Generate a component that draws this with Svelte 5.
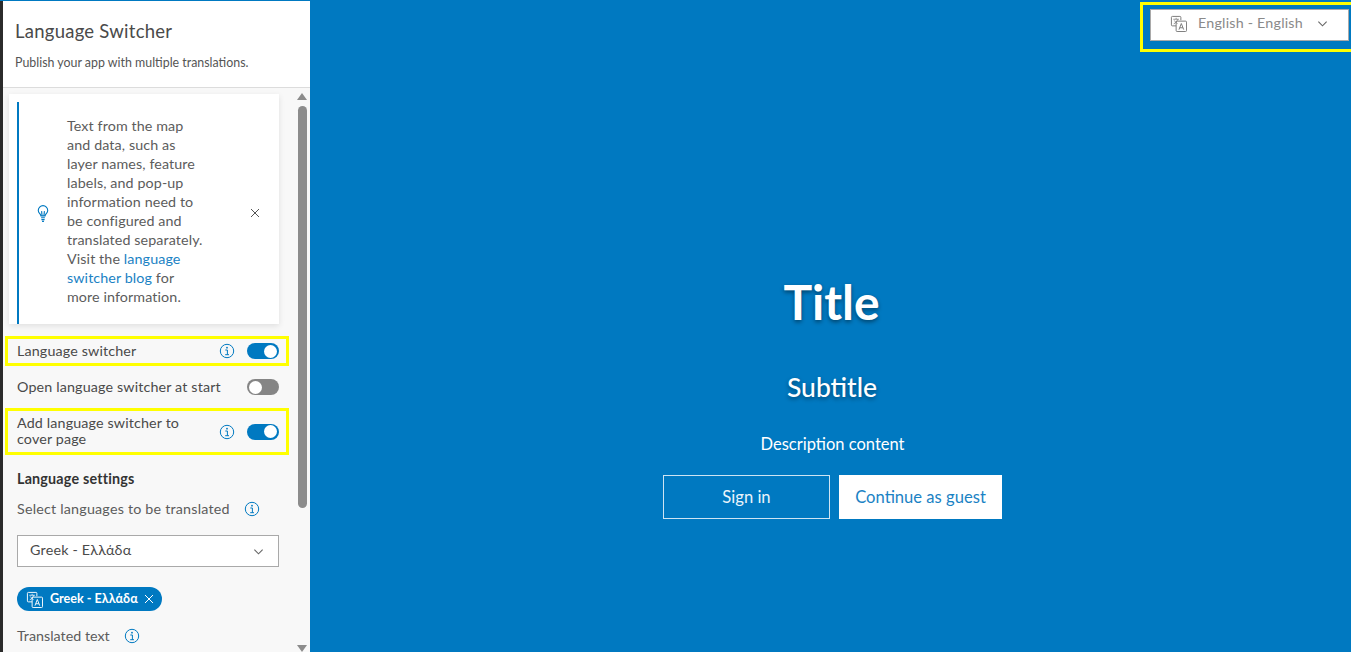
<script>
	const infoText = 'Text from the map and data, such as layer names, feature labels, and pop-up information need to be configured and translated separately.';
</script>

{#snippet translateIcon()}
	<svg class="translate-icon" viewBox="0 0 18 18" fill="none" stroke="currentColor" stroke-width="1">
		<path d="M11.500 5.500V2.500a1 1 0 0 0-1-1h-8a1 1 0 0 0-1 1v8a1 1 0 0 0 1 1h4" />
		<path d="M6.500 3v1.200M3.500 4.500h6M8 4.700c-.5 2-2 3.800-4 4.600M4.600 5.800c.8 1.600 2 2.700 3.400 3.300" stroke-width=".8" />
		<rect x="6.500" y="6.500" width="11" height="11" rx="1" />
		<path d="M9.500 15.500 12 9l2.500 6.500M10.400 13.500h3.200" />
	</svg>
{/snippet}

{#snippet infoIcon()}
	<svg class="info-icon" viewBox="0 0 16 16" fill="none" stroke="#0079c1">
		<circle cx="8" cy="8" r="6.700" />
		<circle cx="8" cy="4.700" r="0.900" fill="#0079c1" stroke="none" />
		<path d="M6.300 7h2.100v4.600M6.200 11.700h3.800" />
	</svg>
{/snippet}

{#snippet chevron()}
	<svg class="chevron" viewBox="0 0 12 12" fill="none" stroke="currentColor" stroke-width="1.200">
		<path d="M1.500 4 6 8.500 10.500 4" />
	</svg>
{/snippet}

{#snippet closeIcon()}
	<svg class="close-icon" viewBox="0 0 10 10" fill="none" stroke="currentColor">
		<path d="M1 1l8 8M9 1l-8 8" />
	</svg>
{/snippet}

<div class="page">
	<aside class="panel">
		<header class="panel-head">
			<h1>Language Switcher</h1>
			<p>Publish your app with multiple translations.</p>
		</header>

		<div class="panel-body">
			<div class="settings">
				<div class="notice">
					<div class="notice-inner">
						<svg class="bulb" viewBox="0 0 12 18" fill="none" stroke="#0079c1" stroke-width="1.200">
							<path d="M3.800 11.500C3.500 9.500 1 8.500 1 5.700a5 5 0 0 1 10 0c0 2.800-2.500 3.800-2.800 5.800z" />
							<path d="M5 11.500 4.500 6.500M7 11.500l.5-5M4 13.500h4M4.300 15.500h3.400M5 17.300h2" />
						</svg>
						<p>{infoText} Visit the <span class="link">language switcher blog</span> for more information.</p>
						<span class="notice-close">{@render closeIcon()}</span>
					</div>
				</div>

				<div class="row marked first-mark">
					<span class="row-label">Language switcher</span>
					{@render infoIcon()}
					<span class="toggle on"></span>
				</div>

				<div class="row plain">
					<span class="row-label">Open language switcher at start</span>
					<span class="toggle"></span>
				</div>

				<div class="row marked second-mark">
					<span class="row-label two-line">Add language switcher to cover page</span>
					{@render infoIcon()}
					<span class="toggle on"></span>
				</div>

				<h2>Language settings</h2>

				<div class="field-label">
					<span>Select languages to be translated</span>
					{@render infoIcon()}
				</div>

				<div class="select">
					<span>Greek - Ελλάδα</span>
					{@render chevron()}
				</div>

				<div class="chip">
					{@render translateIcon()}
					<span>Greek - Ελλάδα</span>
					{@render closeIcon()}
				</div>

				<div class="field-label translated">
					<span>Translated text</span>
					{@render infoIcon()}
				</div>
			</div>

			<div class="scrollbar">
				<span class="arrow up"></span>
				<span class="thumb"></span>
				<span class="arrow down"></span>
			</div>
		</div>
	</aside>

	<main class="cover">
		<div class="cover-top">
			<div class="switcher-mark">
				<div class="switcher">
					{@render translateIcon()}
					<span class="switcher-text">English - English</span>
					{@render chevron()}
				</div>
			</div>
		</div>

		<div class="cover-content">
			<div class="title">Title</div>
			<div class="subtitle">Subtitle</div>
			<div class="description">Description content</div>
			<div class="actions">
				<button class="btn outline">Sign in</button>
				<button class="btn solid">Continue as guest</button>
			</div>
		</div>
	</main>
</div>

<style>
	:global(body) {
		margin: 0;
		overflow: hidden;
	}

	.page {
		display: flex;
		width: 1351px;
		height: 652px;
		background: #0079c1;
		font-family: Lato, "Open Sans", sans-serif;
		color: #4a4a4a;
		overflow: hidden;
	}

	.panel {
		display: flex;
		flex-direction: column;
		flex: none;
		width: 307px;
		height: 651px;
		margin-top: 1px;
		background: #f8f8f8;
		border-left: 3px solid #2b2b2b;
	}

	.panel-head {
		flex: none;
		height: 86px;
		padding: 0 12px;
		background: #fff;
		border-bottom: 1px solid #dcdcdc;
	}

	.panel-head h1 {
		margin: 18px 0 0;
		font-size: 18.500px;
		font-weight: 400;
		line-height: 24px;
		letter-spacing: 0.25px;
		color: #4a4a4a;
	}

	.panel-head p {
		margin: 12px 0 0;
		font-size: 12.400px;
		line-height: 16px;
		color: #555;
	}

	.panel-body {
		display: flex;
		flex: 1;
		min-height: 0;
		overflow: hidden;
	}

	.settings {
		flex: none;
		width: 286px;
		height: 565px;
		overflow: hidden;
		margin-right: 8px;
		letter-spacing: 0.2px;
	}

	.notice {
		margin: 6px 0 0 6px;
		width: 270px;
		height: 230px;
		background: #fff;
		box-shadow: 0 2px 6px rgba(0, 0, 0, 0.1);
		padding-top: 8px;
		box-sizing: border-box;
	}

	.notice-inner {
		display: flex;
		align-items: center;
		height: 222px;
		margin-left: 8px;
		border-left: 2px solid #0079c1;
		box-sizing: border-box;
	}

	.bulb {
		flex: none;
		width: 12px;
		height: 17px;
		margin: 0 0 0 18px;
	}

	.notice p {
		flex: none;
		width: 141px;
		margin: 0 0 4px 18px;
		font-size: 14.300px;
		line-height: 19.100px;
		letter-spacing: 0.1px;
		color: #5c5c5c;
	}

	.link {
		color: #1a82c4;
	}

	.notice-close {
		display: flex;
		margin-left: 42px;
		color: #555;
	}

	.close-icon {
		width: 10px;
		height: 10px;
		flex: none;
	}

	.row {
		position: relative;
		display: flex;
		align-items: center;
		margin-left: 14px;
		width: 262px;
		font-size: 14.300px;
		letter-spacing: 0.14px;
		color: #4a4a4a;
	}

	.marked::before {
		content: "";
		position: absolute;
		left: -12px;
		right: -10px;
		top: 0;
		bottom: 0;
		border: 3px solid #ffff00;
		pointer-events: none;
	}

	.first-mark {
		height: 30px;
		margin-top: 12px;
	}

	.plain {
		height: 24px;
		margin-top: 9px;
	}

	.second-mark {
		height: 47px;
		margin-top: 9px;
	}

	.row-label {
		flex: 1;
		min-width: 0;
		margin-bottom: 2px;
	}

	.two-line {
		line-height: 16px;
		padding-right: 24px;
	}

	.info-icon {
		flex: none;
		width: 16px;
		height: 16px;
	}

	.row .info-icon {
		margin-right: 12px;
	}

	.toggle {
		position: relative;
		flex: none;
		width: 32px;
		height: 16px;
		border-radius: 8px;
		background: #858585;
	}

	.toggle::after {
		content: "";
		position: absolute;
		top: 1.500px;
		left: 2px;
		width: 13px;
		height: 13px;
		border-radius: 50%;
		background: #fff;
	}

	.toggle.on {
		background: #0079c1;
	}

	.toggle.on::after {
		left: 17px;
	}

	h2 {
		margin: 14px 0 0 14px;
		font-size: 14.300px;
		font-weight: 700;
		line-height: 20px;
		color: #333;
	}

	.field-label {
		display: flex;
		align-items: center;
		gap: 14px;
		height: 20px;
		margin: 10px 0 0 14px;
		font-size: 14.300px;
		color: #5c5c5c;
	}

	.field-label span {
		margin-bottom: 2px;
	}

	.select {
		display: flex;
		align-items: center;
		justify-content: space-between;
		width: 262px;
		height: 32px;
		margin: 16px 0 0 14px;
		padding: 0 14px 0 12px;
		background: #fff;
		border: 1px solid #a9a9a9;
		box-sizing: border-box;
		font-size: 14.300px;
		color: #4a4a4a;
	}

	.select span {
		margin-bottom: 3px;
	}

	.chevron {
		flex: none;
		width: 11px;
		height: 11px;
		color: #666;
	}

	.chip {
		display: flex;
		align-items: center;
		width: 145px;
		height: 24px;
		margin: 20px 0 0 14px;
		padding-left: 9px;
		border-radius: 12px;
		background: #0079c1;
		box-sizing: border-box;
		font-size: 12.600px;
		font-weight: 700;
		letter-spacing: 0;
		color: #fff;
	}

	.chip span {
		margin-bottom: 2px;
	}

	.chip .translate-icon {
		width: 17px;
		height: 17px;
		margin-right: 7px;
	}

	.chip .close-icon {
		margin-left: 6px;
	}

	.translated {
		margin-top: 15px;
		letter-spacing: 0;
	}

	.scrollbar {
		display: flex;
		flex-direction: column;
		align-items: center;
		flex: none;
		width: 10px;
	}

	.thumb {
		width: 9px;
		height: 402px;
		margin-top: 6px;
		border-radius: 5px;
		background: #8c8c8c;
	}

	.arrow {
		flex: none;
		width: 0;
		height: 0;
		border-left: 5px solid transparent;
		border-right: 5px solid transparent;
	}

	.arrow.up {
		margin-top: 5px;
		border-bottom: 7px solid #8c8c8c;
	}

	.arrow.down {
		margin-top: auto;
		border-top: 7px solid #8c8c8c;
	}

	.cover {
		flex: 1;
		min-width: 0;
		display: flex;
		flex-direction: column;
		color: #fff;
	}

	.cover-top {
		display: flex;
		justify-content: flex-end;
		padding-top: 2px;
		height: 52px;
		box-sizing: border-box;
	}

	.switcher-mark {
		width: 211px;
		height: 50px;
		border: 3px solid #ffff00;
		border-right: none;
		box-sizing: border-box;
		padding: 4px 2px 0 7px;
	}

	.switcher {
		display: flex;
		align-items: center;
		height: 32px;
		padding: 0 20px 3px 19px;
		background: #fff;
		border: 1px solid #a9a9a9;
		font-size: 14.300px;
		letter-spacing: 0.2px;
		color: #8a8a8a;
		box-sizing: border-box;
	}

	.switcher-text {
		margin-bottom: 2px;
	}

	.switcher .translate-icon {
		flex: none;
		width: 17px;
		height: 17px;
		margin-right: 11px;
		color: #777;
	}

	.switcher .chevron {
		margin-left: auto;
	}

	.cover-content {
		display: flex;
		flex-direction: column;
		align-items: center;
		padding-top: 220px;
		padding-left: 2px;
	}

	.title {
		font-size: 48px;
		font-weight: 700;
		line-height: 60px;
		text-shadow: 0 2px 4px rgba(0, 0, 0, 0.45);
	}

	.subtitle {
		margin-top: 39px;
		padding-left: 1px;
		font-size: 26.500px;
		font-weight: 500;
		line-height: 32px;
		text-shadow: 0 2px 4px rgba(0, 0, 0, 0.4);
	}

	.description {
		margin-top: 31px;
		padding-left: 2px;
		font-size: 16.500px;
		line-height: 20px;
	}

	.actions {
		display: flex;
		gap: 9px;
		margin-top: 21px;
		padding-left: 2px;
	}

	.btn {
		height: 44px;
		font-family: inherit;
		font-size: 16.600px;
		border-radius: 0;
		box-sizing: border-box;
	}

	.btn.outline {
		width: 167px;
		background: transparent;
		border: 1px solid #cde4f3;
		color: #eaf4fb;
	}

	.btn.solid {
		width: 163px;
		background: #fff;
		border: 1px solid #fff;
		color: #1a82c4;
	}
</style>
